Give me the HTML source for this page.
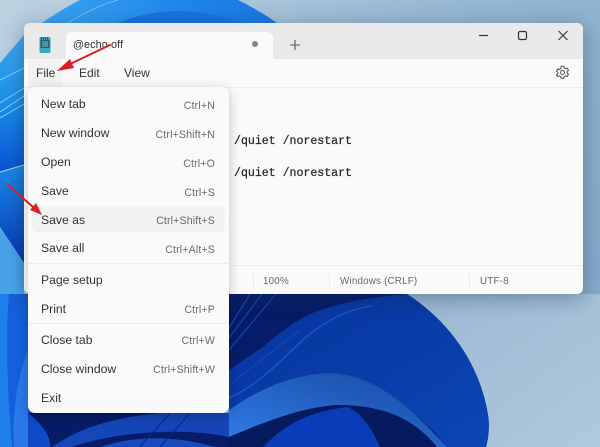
<!DOCTYPE html>
<html><head><meta charset="utf-8"><style>
html,body{margin:0;padding:0}
body{width:600px;height:447px;overflow:hidden;position:relative;background:#9dbbd4;font-family:"Liberation Sans",sans-serif;color:#2b2b2b}
#bg{position:absolute;left:0;top:0}
.t{position:absolute;white-space:nowrap;line-height:16px}
#win{position:absolute;left:24px;top:23px;width:559px;height:271px;background:#fafafa;border-radius:6px;box-shadow:0 4px 22px rgba(20,40,70,.38);overflow:hidden}
#title{position:absolute;left:0;top:0;width:559px;height:36px;background:#e9e9e9}
#tab{position:absolute;left:42px;top:9px;width:207px;height:28px;background:#fafafa;border-radius:6px 6px 0 0}
#menu{position:absolute;left:28px;top:87px;width:201px;height:326px;background:#fafafa;border-radius:7px;box-shadow:0 3px 12px rgba(0,0,0,.22)}
.m{font-size:12.2px;left:41px;color:#333}
.s{font-size:10.6px;right:385px;color:#6a6a6a;letter-spacing:.15px}
.b{font-size:9.8px;color:#666;letter-spacing:.2px;top:274px}
.c{font-family:"Liberation Mono",monospace;font-size:11.57px;color:#222;left:234px;-webkit-text-stroke:.2px #222}
.sep{position:absolute;background:#ebebeb;height:1px}
</style></head><body>
<svg id="bg" width="600" height="447" viewBox="0 0 600 447">
<defs>
<linearGradient id="sky" x1="0" y1="0" x2="1" y2=".6"><stop offset="0" stop-color="#bcd2e1"/><stop offset=".55" stop-color="#98b9d3"/><stop offset="1" stop-color="#86abc9"/></linearGradient>
<linearGradient id="skyb" x1="0" y1="0" x2="1" y2="1"><stop offset="0" stop-color="#9cb9d3"/><stop offset="1" stop-color="#aec8dc"/></linearGradient>
<linearGradient id="top" x1="0" y1="0" x2="1" y2="0"><stop offset="0" stop-color="#3aa4f2"/><stop offset=".6" stop-color="#1f86ea"/><stop offset="1" stop-color="#1a78e0"/></linearGradient>
<linearGradient id="lf" x1="0" y1="0" x2="0" y2="1"><stop offset="0" stop-color="#3fa8ee"/><stop offset=".5" stop-color="#1a90ea"/><stop offset="1" stop-color="#0a52d4"/></linearGradient>
<linearGradient id="lf2" x1="0" y1="0" x2="0" y2="1"><stop offset="0" stop-color="#1b8ae8"/><stop offset="1" stop-color="#0636b4"/></linearGradient>
<linearGradient id="band" x1="0" y1="1" x2="1" y2="0"><stop offset="0" stop-color="#2f7ee8"/><stop offset="1" stop-color="#18479f"/></linearGradient>
<linearGradient id="mid" x1="0" y1="0" x2="1" y2="1"><stop offset="0" stop-color="#08349c"/><stop offset="1" stop-color="#0a46b4"/></linearGradient>
</defs>
<rect width="600" height="447" fill="url(#sky)"/>
<rect x="400" y="294" width="200" height="153" fill="url(#skyb)"/>
<path d="M42 23C55 14 68 6 80 0H238C252 7 266 15 277 23Z" fill="url(#top)"/>
<path d="M68 23C85 12 100 5 118 0" stroke="#6bbdf5" stroke-width="1" fill="none"/>
<path d="M118 23C150 9 200 5 240 23Z" fill="#1a73e2"/>
<path d="M0 63L24 35V165L0 172Z" fill="url(#lf)"/>
<path d="M0 172L24 165V263L0 227Z" fill="url(#lf2)"/>
<path d="M0 227L24 263V300H0Z" fill="#4aa4ea"/>
<path d="M0 80L24 68M0 103L24 88M0 112L24 96M0 118L24 104" stroke="#8ccdf5" stroke-width="1" fill="none"/>
<path d="M0 172L24 165" stroke="#a9dcf7" stroke-width="1"/>
<rect x="0" y="294" width="60" height="153" fill="#1460dc"/>
<path d="M0 294H9C5 340 8 400 12 447H0Z" fill="#1f80ec"/>
<path d="M14 447C12 410 18 375 28 350V447Z" fill="#2a78ea"/>
<path d="M28 390C36 405 44 425 50 447H28Z" fill="#0f4ac8"/>
<path d="M28 413H229V294H407C450 322 480 365 488 415C490 428 488 440 486 447H50C50 435 42 424 28 413Z" fill="#071c68"/>
<path d="M229 370L263 347C280 332 300 318 313 313C335 304 365 298 407 294C450 322 480 365 488 415C490 428 488 440 486 447H447C430 425 400 395 330 373C287 375 255 395 229 410Z" fill="url(#mid)"/>
<path d="M229 398C255 387 280 362 306 337C330 318 350 309 372 306" stroke="#1a55c2" stroke-width="1.500" fill="none"/>
<path d="M229 410C255 392 287 375 330 373C380 375 417 415 447 447H437C420 427 395 405 337 405C300 408 270 420 229 437Z" fill="url(#band)"/>
<path d="M229 437C270 420 300 408 337 405C395 405 420 427 437 447H229Z" fill="#061a60"/>
<path d="M263 447C280 430 300 413 347 407C362 412 372 430 380 447Z" fill="#0a3cb8"/>
<path d="M52 447C80 428 110 418 160 413H229V437C190 428 120 430 72 447Z" fill="#1446b8"/>
<path d="M100 447C130 437 170 434 215 447Z" fill="#174cc0"/>
<path d="M160 447C170 435 180 425 190 413M140 447C150 435 160 425 170 413" stroke="#0a2a86" stroke-width="1.200" fill="none"/>
<path d="M229 338L262 294M229 350L276 294M229 328L250 294M229 385L300 330" stroke="#0d48b4" stroke-width="1.200" fill="none"/>
</svg>

<div id="win">
<div id="title"></div>
<div id="tab"></div>
<div class="sep" style="left:0;top:64px;width:559px;background:#eeeeee"></div>
<div class="sep" style="left:0;top:242px;width:559px;background:#eeeeee"></div>
</div>

<svg style="position:absolute;left:38px;top:36px" width="14" height="18" viewBox="0 0 14 18"><rect x="1.500" y="1" width="11" height="16" rx="1.500" fill="#35a9b5"/><rect x="2.500" y="4" width="9" height="8" fill="#2a5d73"/><path d="M3 2.500h8" stroke="#1c3f52" stroke-width="2" stroke-dasharray="1 1"/><path d="M4 6h6M4 8h6M4 10h6" stroke="#a9d8df" stroke-width=".8"/></svg>
<div class="t" style="left:73px;top:37px;font-size:10.8px;color:#333;letter-spacing:.1px">@echo off</div>
<div style="position:absolute;left:252px;top:41px;width:6px;height:6px;border-radius:50%;background:#858585"></div>
<svg style="position:absolute;left:289px;top:39px" width="12" height="12"><path d="M6 1V11M1 6H11" stroke="#555" stroke-width="1.100"/></svg>
<svg style="position:absolute;left:474px;top:28px" width="100" height="16" fill="none" stroke="#333"><path d="M5 7.500H14" stroke-width="1.200"/><rect x="44.500" y="3.500" width="8" height="8" rx="1.500" stroke-width="1.200"/><path d="M84.500 3L93.500 12M93.500 3L84.500 12" stroke-width="1.100"/></svg>
<svg style="position:absolute;left:555px;top:65px" width="15" height="15" viewBox="0 0 15 15" fill="none" stroke="#555" stroke-width="1"><circle cx="7.500" cy="7.500" r="2"/><path d="M6.200 1.200h2.600l.4 1.800 1.300.7 1.700-.6 1.300 2.300-1.300 1.200v1.400l1.300 1.200-1.300 2.300-1.700-.6-1.300.7-.4 1.800H6.200l-.4-1.800-1.300-.7-1.700.6L1.500 10l1.300-1.200V7.400L1.500 6.200 2.800 3.900l1.700.6 1.300-.7z"/></svg>

<div style="position:absolute;left:28px;top:60px;width:34px;height:27px;background:#f2f2f2"></div>
<div class="t" style="left:36px;top:65px;font-size:12px;color:#333">File</div>
<div class="t" style="left:79px;top:65px;font-size:12px;color:#333">Edit</div>
<div class="t" style="left:124px;top:65px;font-size:12px;color:#333">View</div>

<div class="t c" style="top:134px">/quiet /norestart</div>
<div class="t c" style="top:166px">/quiet /norestart</div>

<div class="sep" style="left:253px;top:274px;width:1px;height:14px"></div>
<div class="sep" style="left:329px;top:274px;width:1px;height:14px"></div>
<div class="sep" style="left:469px;top:274px;width:1px;height:14px"></div>
<div class="t b" style="left:263px">100%</div>
<div class="t b" style="left:340px">Windows (CRLF)</div>
<div class="t b" style="left:480px">UTF-8</div>

<div id="menu"></div>
<div style="position:absolute;left:32px;top:206px;width:193px;height:26px;background:#f2f2f2;border-radius:5px"></div>
<div class="sep" style="left:28px;top:263px;width:201px"></div>
<div class="sep" style="left:28px;top:323px;width:201px"></div>

<div class="t m" style="top:96px">New tab</div><div class="t s" style="top:98px">Ctrl+N</div>
<div class="t m" style="top:125px">New window</div><div class="t s" style="top:127px">Ctrl+Shift+N</div>
<div class="t m" style="top:154px">Open</div><div class="t s" style="top:156px">Ctrl+O</div>
<div class="t m" style="top:183px">Save</div><div class="t s" style="top:185px">Ctrl+S</div>
<div class="t m" style="top:212px">Save as</div><div class="t s" style="top:213px">Ctrl+Shift+S</div>
<div class="t m" style="top:240px">Save all</div><div class="t s" style="top:242px">Ctrl+Alt+S</div>
<div class="t m" style="top:272px">Page setup</div>
<div class="t m" style="top:301px">Print</div><div class="t s" style="top:302px">Ctrl+P</div>
<div class="t m" style="top:332px">Close tab</div><div class="t s" style="top:333px">Ctrl+W</div>
<div class="t m" style="top:361px">Close window</div><div class="t s" style="top:362px">Ctrl+Shift+W</div>
<div class="t m" style="top:390px">Exit</div>

<svg style="position:absolute;left:0;top:0;pointer-events:none" width="600" height="447" fill="none">
<path d="M110 45L68 65" stroke="#d81f26" stroke-width="2" stroke-linecap="round"/><path d="M57 71L70 59L74 68Z" fill="#d81f26"/>
<path d="M8 185L33 207" stroke="#d81f26" stroke-width="2" stroke-linecap="round"/><path d="M42 215L30 210L36 203Z" fill="#d81f26"/>
</svg>
</body></html>
